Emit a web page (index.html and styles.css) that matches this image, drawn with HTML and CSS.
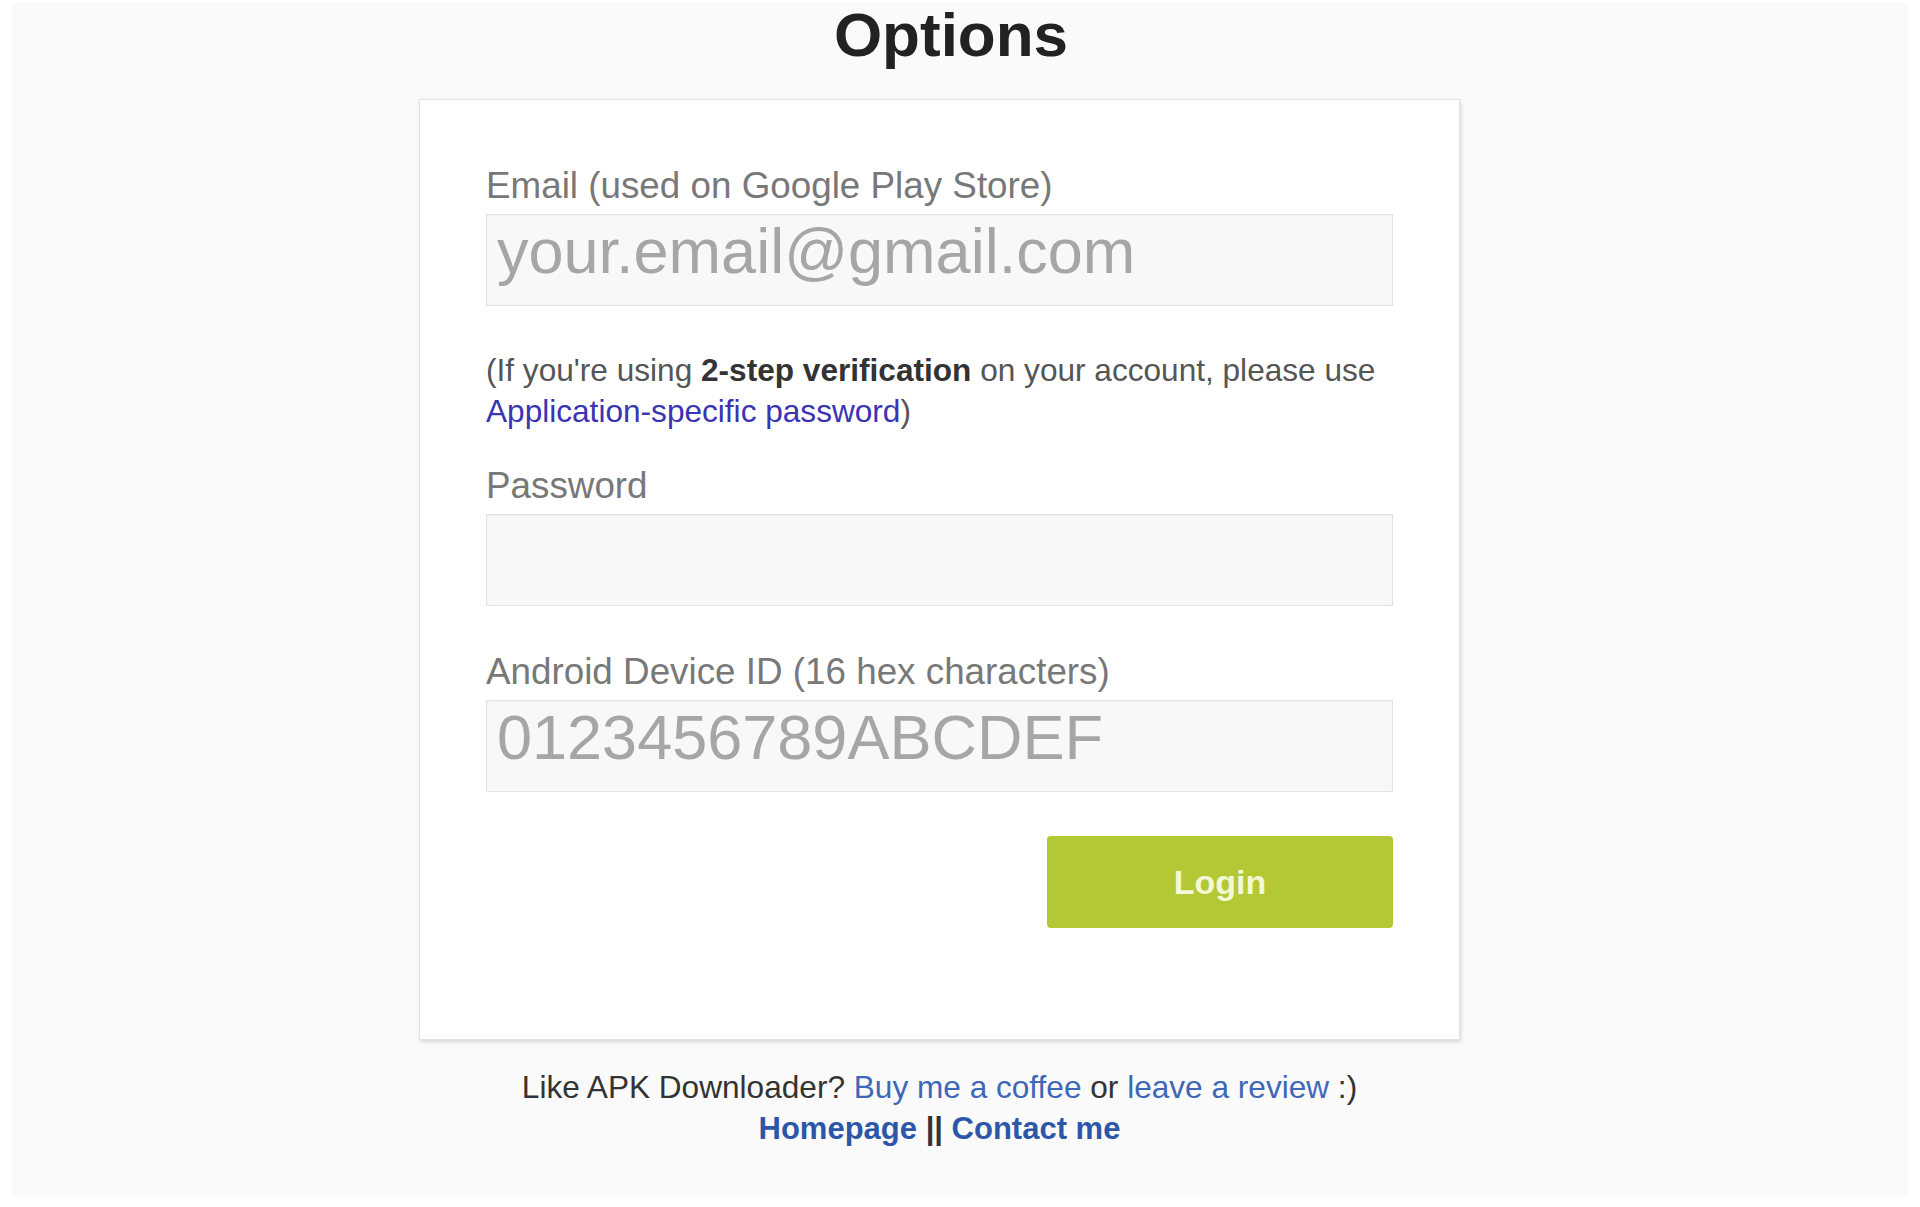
FILE: index.html
```html
<!DOCTYPE html>
<html lang="en">
<head>
  <meta charset="UTF-8">
  <meta name="viewport" content="width=device-width, initial-scale=1.0">
  <title>Options | APK Downloader</title>
  <link rel="stylesheet" href="styles.css">
</head>
<body>
  <div class="page">
    <h1>Options</h1>
    <form class="card">
      <div class="field first">
        <label for="email">Email (used on Google Play Store)</label>
        <input type="text" id="email" placeholder="your.email@gmail.com" />
      </div>
      <p class="hint">(If you're using <b>2-step verification</b> on your account, please use <a href="#">Application-specific password</a>)</p>
      <div class="field after-hint">
        <label for="password">Password</label>
        <input type="password" id="password" />
      </div>
      <div class="field">
        <label for="device">Android Device ID (16 hex characters)</label>
        <input type="text" id="device" placeholder="0123456789ABCDEF" />
      </div>
      <div class="actions">
        <button type="button">Login</button>
      </div>
    </form>
    <footer>
      <div>Like APK Downloader? <a href="#">Buy me a coffee</a> or <a href="#">leave a review</a> :)</div>
      <div class="links"><a href="#">Homepage</a> || <a href="#">Contact me</a></div>
    </footer>
  </div>
</body>
</html>
```

FILE: styles.css
```css
* {
  box-sizing: border-box;
}
html {
  background: #fff;
}
body {
  font-family: 'Liberation Sans', Arial, sans-serif;
  background: #fafafa;
  margin: 3px 12px 12px;
  min-height: calc(100vh - 15px);
}
.page {
  display: flex;
  flex-direction: column;
  align-items: center;
  padding-right: 41px;
}
h1 {
  margin: 0;
  padding-left: 23px;
  font-size: 62px;
  line-height: 64px;
  color: #222;
}
.card {
  width: 1041px;
  margin-top: 32px;
  background: #fff;
  border: 1px solid #e2e2e2;
  box-shadow: 1px 2px 4px rgba(0,0,0,0.14);
  padding: 64px 66px 111px;
}
.field {
  margin-top: 44px;
}
.field.first {
  margin-top: 0;
}
.field.after-hint {
  margin-top: 32px;
}
label {
  display: block;
  font-size: 36.8px;
  line-height: 44px;
  color: #787878;
  margin-bottom: 6px;
}
input {
  display: block;
  width: 100%;
  height: 92px;
  padding: 0 10px 19px;
  border: 1px solid #e3e3e3;
  background: #f8f8f8;
  box-shadow: inset 0 1px 2px rgba(0,0,0,0.04);
  font-family: inherit;
  font-size: 63px;
  color: #555;
  outline: none;
}
input::placeholder {
  color: #a6a6a6;
}
.hint {
  margin: 44px 0 0;
  font-size: 31.6px;
  line-height: 41px;
  color: #555;
}
.hint b {
  color: #333;
}
.hint a {
  color: #3a33b3;
  text-decoration: none;
}
.actions {
  display: flex;
  justify-content: flex-end;
  margin-top: 44px;
}
button {
  width: 346px;
  height: 92px;
  border: none;
  border-radius: 4px;
  background: #b4c734;
  color: #f3f8d6;
  font-family: inherit;
  font-size: 34px;
  font-weight: bold;
  cursor: pointer;
}
footer {
  margin-top: 27px;
  text-align: center;
  font-size: 31.6px;
  line-height: 41px;
  color: #333;
}
footer a {
  color: #3d68b8;
  text-decoration: none;
}
footer .links {
  font-weight: bold;
  font-size: 31px;
}
footer .links a {
  color: #2c57a8;
}
```
